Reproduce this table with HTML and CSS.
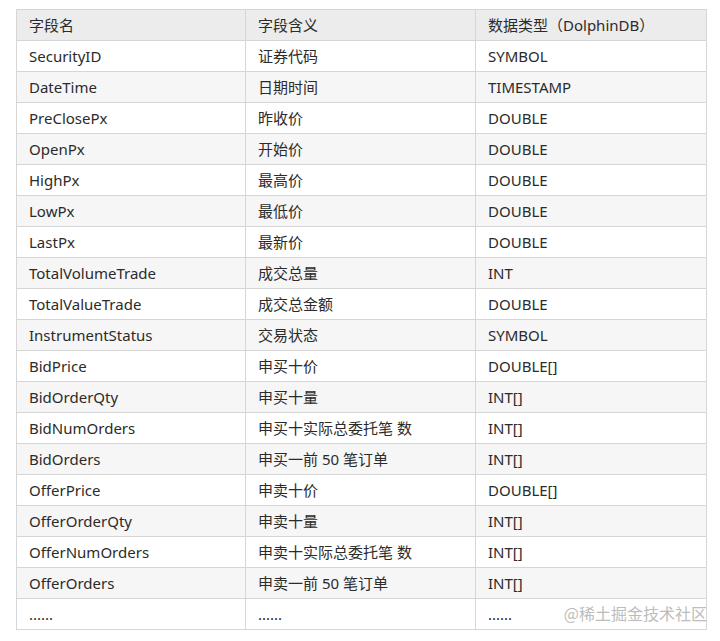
FILE: index.html
```html
<!DOCTYPE html>
<html lang="zh">
<head>
<meta charset="utf-8">
<link rel="stylesheet" href="styles.css">
</head>
<body>
<div class="wrap">
<table class="fields">
<thead>
<tr><th>字段名</th><th>字段含义</th><th>数据类型（DolphinDB）</th></tr>
</thead>
<tbody>
<tr><td>SecurityID</td><td>证券代码</td><td>SYMBOL</td></tr>
<tr><td>DateTime</td><td>日期时间</td><td>TIMESTAMP</td></tr>
<tr><td>PreClosePx</td><td>昨收价</td><td>DOUBLE</td></tr>
<tr><td>OpenPx</td><td>开始价</td><td>DOUBLE</td></tr>
<tr><td>HighPx</td><td>最高价</td><td>DOUBLE</td></tr>
<tr><td>LowPx</td><td>最低价</td><td>DOUBLE</td></tr>
<tr><td>LastPx</td><td>最新价</td><td>DOUBLE</td></tr>
<tr><td>TotalVolumeTrade</td><td>成交总量</td><td>INT</td></tr>
<tr><td>TotalValueTrade</td><td>成交总金额</td><td>DOUBLE</td></tr>
<tr><td>InstrumentStatus</td><td>交易状态</td><td>SYMBOL</td></tr>
<tr><td>BidPrice</td><td>申买十价</td><td>DOUBLE[]</td></tr>
<tr><td>BidOrderQty</td><td>申买十量</td><td>INT[]</td></tr>
<tr><td>BidNumOrders</td><td>申买十实际总委托笔 数</td><td>INT[]</td></tr>
<tr><td>BidOrders</td><td>申买一前 50 笔订单</td><td>INT[]</td></tr>
<tr><td>OfferPrice</td><td>申卖十价</td><td>DOUBLE[]</td></tr>
<tr><td>OfferOrderQty</td><td>申卖十量</td><td>INT[]</td></tr>
<tr><td>OfferNumOrders</td><td>申卖十实际总委托笔 数</td><td>INT[]</td></tr>
<tr><td>OfferOrders</td><td>申卖一前 50 笔订单</td><td>INT[]</td></tr>
<tr><td>......</td><td>......</td><td class="last">......<span class="mark">@稀土掘金技术社区</span></td></tr>
</tbody>
</table>
</div>
</body>
</html>
```

FILE: styles.css
```css
html, body {
  margin: 0;
  padding: 0;
  background: #ffffff;
}
.wrap {
  padding: 9px 14px 0 16px;
}
.fields {
  border-collapse: collapse;
  width: 690px;
  table-layout: fixed;
  font-family: "Noto Sans", "Noto Sans CJK SC", sans-serif;
  font-size: 15px;
  color: #2b2b2b;
}
.fields th,
.fields td {
  border: 1px solid #d6d6d6;
  height: 31px;
  padding: 0 12px;
  text-align: left;
  font-weight: normal;
  box-sizing: border-box;
  white-space: nowrap;
  line-height: 20px;
}
.fields th:nth-child(1) { width: 229px; }
.fields th:nth-child(2) { width: 230px; }
.fields th:nth-child(3) { width: 231px; }
.fields thead tr {
  background: #ececec;
}
.fields tbody tr:nth-child(even) {
  background: #f6f6f6;
}
.fields td.last {
  position: relative;
}
.mark {
  position: absolute;
  right: -1px;
  top: 4px;
  font-size: 16px;
  color: #bdbdbd;
  font-family: "Noto Sans CJK SC", sans-serif;
}
```
